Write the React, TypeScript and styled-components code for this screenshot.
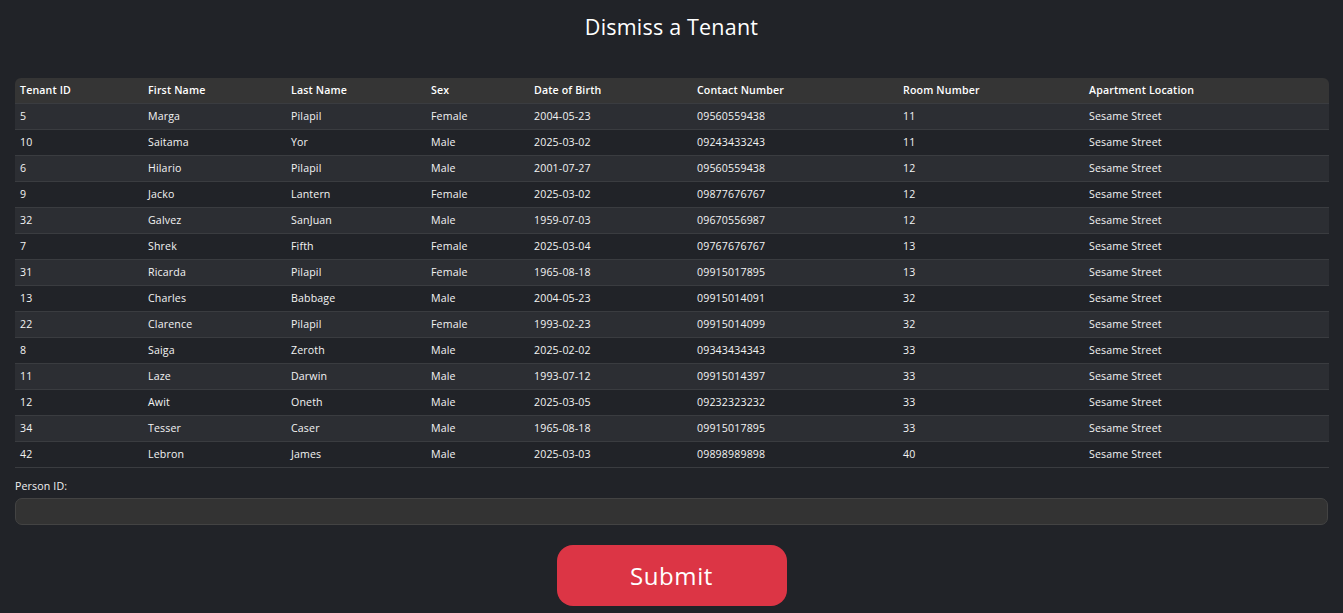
import React from "react";
import styled, { createGlobalStyle } from "styled-components";

const Global = createGlobalStyle`
  html, body { margin: 0; padding: 0; background: #212328; }
  body { font-family: "Open Sans", "Noto Sans", sans-serif; color: #f1f1f1; }
  * { box-sizing: border-box; }
`;

const Page = styled.div`
  display: flex;
  flex-direction: column;
  padding: 0 15px;
  min-height: 613px;
`;

const Title = styled.h1`
  margin: 15px 0 0;
  height: 24px;
  line-height: 24px;
  text-align: center;
  font-size: 21.5px;
  font-weight: 500;
  letter-spacing: 0.2px;
  color: #ffffff;
`;

const Table = styled.table`
  margin-top: 39px;
  width: 100%;
  border-collapse: separate;
  border-spacing: 0;
  table-layout: fixed;
  font-size: 10.6px;
  letter-spacing: 0.15px;
`;

const HeadCell = styled.th`
  background: #353535;
  height: 26px;
  padding: 0 5px 2px;
  text-align: left;
  font-weight: 600;
  color: #ffffff;
  border-bottom: 1px solid #3a3c40;
  &:first-child { border-top-left-radius: 6px; }
  &:last-child { border-top-right-radius: 6px; }
`;

const Row = styled.tr<{ $odd: boolean }>`
  background: ${(p) => (p.$odd ? "#2c2e33" : "#212328")};
`;

const Cell = styled.td`
  height: 26px;
  padding: 0 5px 2px;
  border-bottom: 1px solid #3a3c40;
  color: #f3f3f3;
  white-space: nowrap;
`;

const Field = styled.div`
  display: flex;
  flex-direction: column;
  margin-top: 12px;
`;

const Label = styled.label`
  font-size: 10.6px;
  letter-spacing: 0.15px;
  color: #f1f1f1;
  height: 13px;
  line-height: 13px;
  margin-bottom: 5px;
`;

const Input = styled.input`
  height: 27px;
  background: #333333;
  border: 1px solid #434343;
  border-radius: 7px;
  color: #fff;
  outline: none;
`;

const ButtonRow = styled.div`
  display: flex;
  justify-content: center;
  margin-top: 20px;
`;

const SubmitButton = styled.button`
  width: 230px;
  height: 61px;
  background: #dc3545;
  border: none;
  border-radius: 16px;
  color: #ffffff;
  font-family: "Open Sans", "Noto Sans", sans-serif;
  font-size: 24px;
  letter-spacing: 0.6px;
  font-weight: 400;
`;

const widths = [128, 143, 140, 103, 163, 206, 186, 245];
const headers = [
  "Tenant ID",
  "First Name",
  "Last Name",
  "Sex",
  "Date of Birth",
  "Contact Number",
  "Room Number",
  "Apartment Location",
];

const rows: string[][] = [
  ["5", "Marga", "Pilapil", "Female", "2004-05-23", "09560559438", "11"],
  ["10", "Saitama", "Yor", "Male", "2025-03-02", "09243433243", "11"],
  ["6", "Hilario", "Pilapil", "Male", "2001-07-27", "09560559438", "12"],
  ["9", "Jacko", "Lantern", "Female", "2025-03-02", "09877676767", "12"],
  ["32", "Galvez", "SanJuan", "Male", "1959-07-03", "09670556987", "12"],
  ["7", "Shrek", "Fifth", "Female", "2025-03-04", "09767676767", "13"],
  ["31", "Ricarda", "Pilapil", "Female", "1965-08-18", "09915017895", "13"],
  ["13", "Charles", "Babbage", "Male", "2004-05-23", "09915014091", "32"],
  ["22", "Clarence", "Pilapil", "Female", "1993-02-23", "09915014099", "32"],
  ["8", "Saiga", "Zeroth", "Male", "2025-02-02", "09343434343", "33"],
  ["11", "Laze", "Darwin", "Male", "1993-07-12", "09915014397", "33"],
  ["12", "Awit", "Oneth", "Male", "2025-03-05", "09232323232", "33"],
  ["34", "Tesser", "Caser", "Male", "1965-08-18", "09915017895", "33"],
  ["42", "Lebron", "James", "Male", "2025-03-03", "09898989898", "40"],
];

export default function App() {
  return (
    <>
      <Global />
      <Page>
        <Title>Dismiss a Tenant</Title>
        <Table>
          <colgroup>
            {widths.map((w, i) => (
              <col key={i} style={{ width: w }} />
            ))}
          </colgroup>
          <thead>
            <tr>
              {headers.map((h) => (
                <HeadCell key={h}>{h}</HeadCell>
              ))}
            </tr>
          </thead>
          <tbody>
            {rows.map((r, i) => (
              <Row key={i} $odd={i % 2 === 0}>
                {r.map((c, j) => (
                  <Cell key={j}>{c}</Cell>
                ))}
                <Cell>Sesame Street</Cell>
              </Row>
            ))}
          </tbody>
        </Table>
        <Field>
          <Label>Person ID:</Label>
          <Input type="text" />
        </Field>
        <ButtonRow>
          <SubmitButton>Submit</SubmitButton>
        </ButtonRow>
      </Page>
    </>
  );
}
